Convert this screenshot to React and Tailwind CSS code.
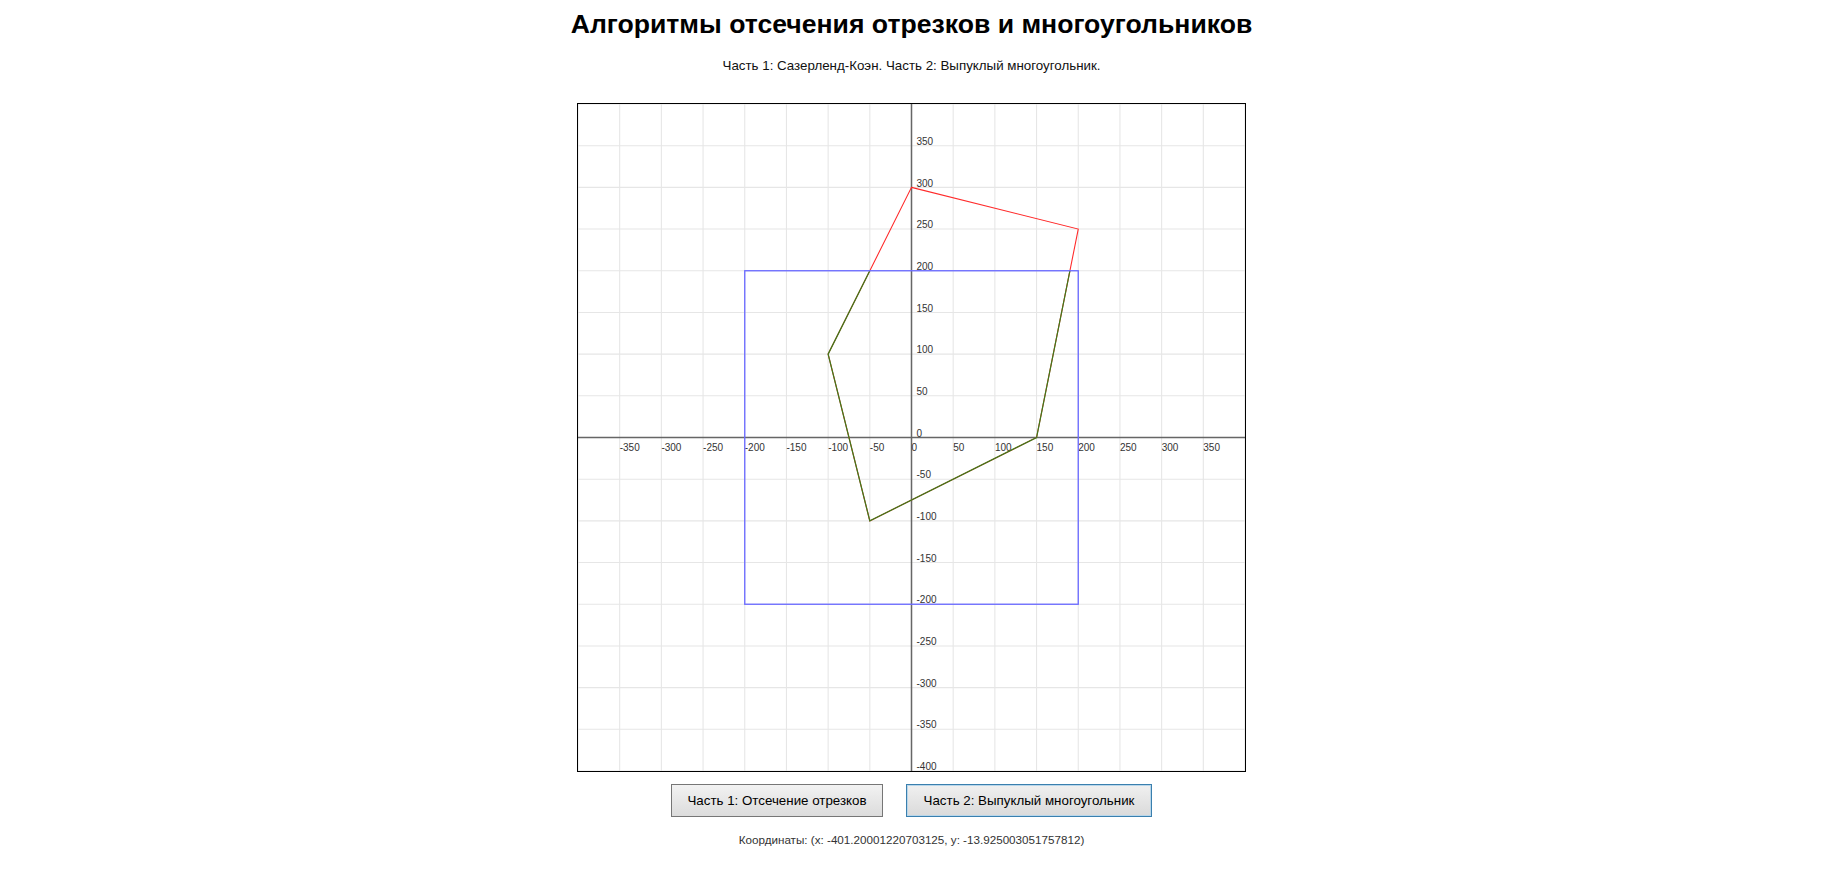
import React from 'react'

const steps = []
for (let v = -400; v <= 400; v += 50) steps.push(v)

const Plot = () => {
  const toX = (x) => x + 400
  const toY = (y) => 400 - y

  return (
    <svg width="667" height="667" viewBox="0 0 800 800" className="block">
      <rect x="0" y="0" width="800" height="800" fill="#fff" />
      {/* grid */}
      {steps.map((v) => (
        <g key={'g' + v}>
          <line x1={toX(v)} y1="0" x2={toX(v)} y2="800" stroke="#e6e6e6" strokeWidth="1.3" />
          <line x1="0" y1={toY(v)} x2="800" y2={toY(v)} stroke="#e6e6e6" strokeWidth="1.3" />
        </g>
      ))}
      {/* axes */}
      <line x1="0" y1="400" x2="800" y2="400" stroke="#666" strokeWidth="1.8" />
      <line x1="400" y1="0" x2="400" y2="800" stroke="#666" strokeWidth="1.8" />
      {/* labels */}
      <g fontFamily='"Liberation Sans", Arial, sans-serif' fontSize="12" fill="#333">
        {steps
          .filter((v) => v > -400 && v < 400)
          .map((v) => (
            <text key={'x' + v} x={toX(v)} y="416">
              {v}
            </text>
          ))}
        {steps
          .filter((v) => v < 400)
          .map((v) => (
            <text key={'y' + v} x="406" y={toY(v) - 1}>
              {v}
            </text>
          ))}
      </g>
      {/* source polygon */}
      <polygon
        points="400,100 600,150 550,400 350,500 300,300"
        fill="none"
        stroke="#ff2a2a"
        strokeWidth="1.3"
      />
      {/* clipped part */}
      <polyline
        points="350,200 300,300 350,500 550,400 590,200"
        fill="none"
        stroke="#3d7a1c"
        strokeWidth="1.5"
      />
      {/* clip window */}
      <rect x="200" y="200" width="400" height="400" fill="none" stroke="#6b6bff" strokeWidth="1.6" />
    </svg>
  )
}

export default function App() {
  const font = { fontFamily: '"Liberation Sans", Arial, sans-serif' }

  return (
    <div className="w-[1823px] min-h-screen bg-white flex flex-col items-center" style={font}>
      <h1 className="mt-[8px] text-[26.6px] leading-[32px] font-bold text-black">
        Алгоритмы отсечения отрезков и многоугольников
      </h1>
      <p className="mt-[18px] text-[13.33px] leading-[16px] text-[#111]">
        Часть 1: Сазерленд-Коэн. Часть 2: Выпуклый многоугольник.
      </p>
      <div className="mt-[29px] border border-black">
        <Plot />
      </div>
      <div className="mt-[12px] flex gap-[23px]">
        <button className="w-[212px] h-[33px] border border-[#767676] bg-gradient-to-b from-[#f2f2f2] to-[#dcdcdc] text-[13.33px] text-black">
          Часть 1: Отсечение отрезков
        </button>
        <button className="w-[246px] h-[33px] border border-[#3a7fae] shadow-[inset_0_0_0_1px_#b8d6ea] bg-gradient-to-b from-[#f0f0f0] to-[#dadada] text-[13.33px] text-black">
          Часть 2: Выпуклый многоугольник
        </button>
      </div>
      <p className="mt-[16px] text-[11.67px] leading-[13.4px] text-[#333]">
        Координаты: (x: -401.20001220703125, y: -13.925003051757812)
      </p>
    </div>
  )
}
